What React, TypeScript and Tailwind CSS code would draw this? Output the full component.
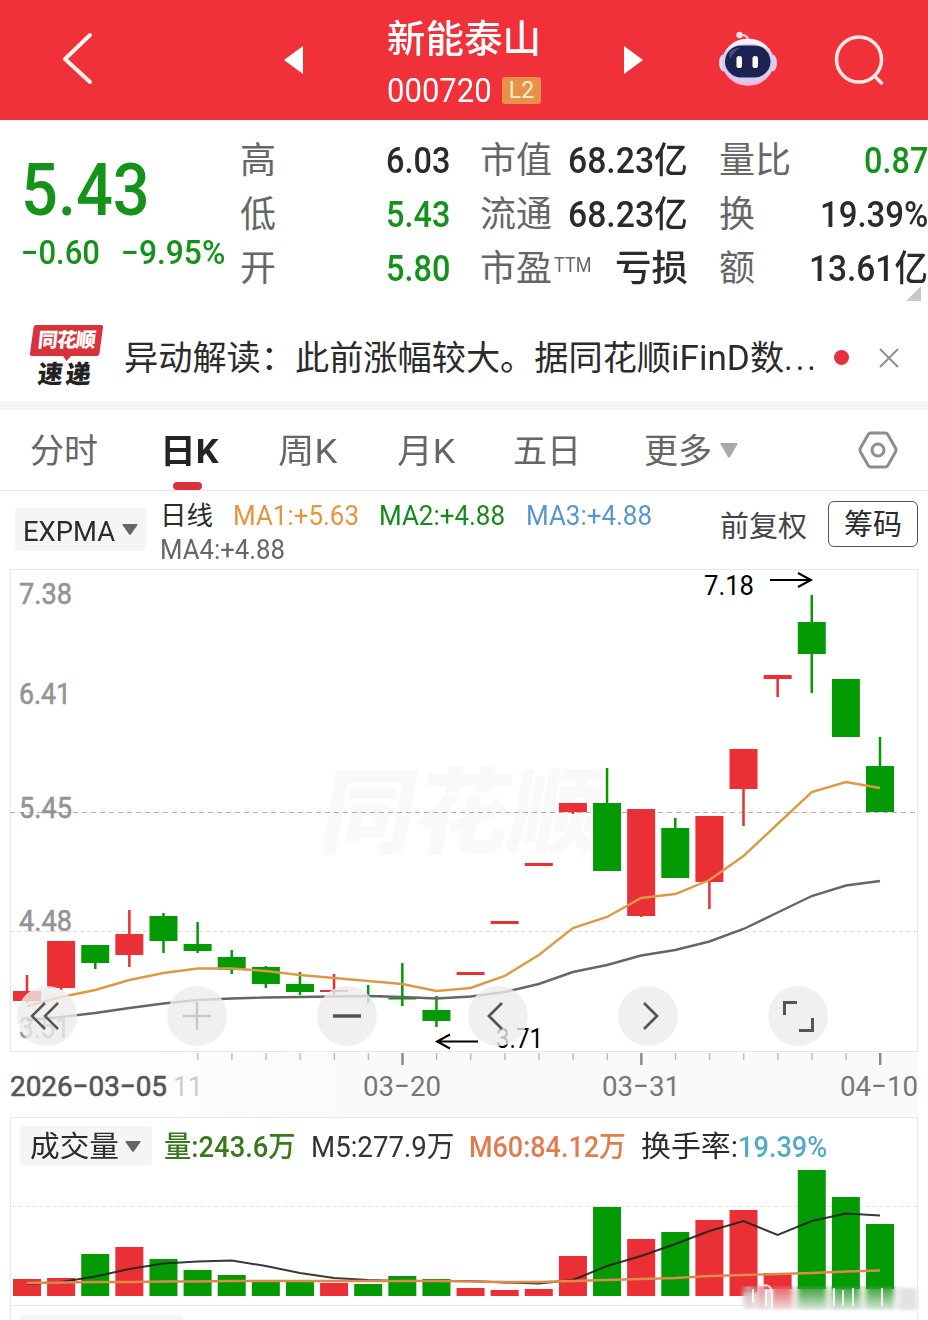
import React, { useLayoutEffect, useRef, useState } from "react";

const RED = "#ea3034";
const GREEN = "#049a04";

type Candle = { up: boolean; top: number; bottom: number; high: number; low: number; vol: number };

const c = (up: boolean, top: number, bottom: number, high: number, low: number, vol: number): Candle => ({
  up, top, bottom, high, low, vol,
});

const candles: Candle[] = [
  c(true, 991, 1001, 975, 1003, 1279),
  c(true, 941, 988, 941, 990, 1278),
  c(false, 945, 963, 945, 969, 1254),
  c(true, 934, 955, 910, 967, 1247),
  c(false, 916, 941, 913, 953, 1259),
  c(false, 944, 951, 922, 953, 1270),
  c(false, 957, 970, 950, 974, 1275),
  c(false, 967, 984, 966, 988, 1281),
  c(false, 984, 992, 972, 995, 1282),
  c(true, 990, 992, 974, 995, 1283),
  c(false, 995, 997, 985, 1003, 1284),
  c(false, 997.5, 999.5, 963, 1006, 1276),
  c(false, 1010, 1021, 996, 1027, 1279),
  c(true, 972, 975, 972, 975, 1288),
  c(true, 921, 924, 921, 924, 1290),
  c(true, 863, 866, 863, 866, 1289),
  c(true, 803, 812, 803, 814, 1256),
  c(false, 803, 871, 768, 871, 1207),
  c(true, 809, 916, 809, 917, 1239),
  c(false, 828, 878, 818, 878, 1232),
  c(true, 816, 882, 816, 909, 1220),
  c(true, 749, 789, 749, 826, 1210),
  c(true, 675, 679, 675, 697, 1273),
  c(false, 622, 654, 595, 693, 1170),
  c(false, 679, 737, 679, 737, 1197),
  c(false, 766, 812, 737, 812, 1224),
];

const xOf = (i: number) => 27 + i * 34.12;

const ema1 = [
  1006, 997, 990, 980, 973, 968.5, 968.5, 971, 975, 978, 981, 984, 991, 988, 976, 955, 928, 917, 898, 894, 880, 856,
  824, 792, 782, 788,
];
const ema2 = [
  1020, 1017, 1013, 1008, 1003.5, 1000, 998.5, 997.5, 997, 996.5, 996, 997, 998.5, 996.5, 992, 984, 972, 965, 955.5,
  950, 941.5, 929, 912.5, 896, 885.5, 881,
];
const vol5 = [
  1284, 1282, 1276.5, 1269, 1263.5, 1261.5, 1260.5, 1266, 1273, 1278, 1280, 1281, 1281, 1281, 1282.5, 1283.5, 1280,
  1266, 1256, 1244, 1231, 1221, 1235, 1221, 1213.5, 1215.5,
];
const vol60 = [
  1283, 1282.5, 1282, 1282, 1281.5, 1281.5, 1281, 1281, 1281, 1281, 1281, 1281, 1281, 1281.5, 1282, 1282, 1281, 1280,
  1279, 1278, 1276, 1275, 1274, 1273, 1271.5, 1270.5,
];

const points = (ys: number[]) => ys.map((y, i) => `${xOf(i)},${y}`).join(" ");

// Condenses a run of text to a given width, like the DIN digits of the app
const Fit = ({ w, className = "", children }: { w: number; className?: string; children: React.ReactNode }) => {
  const ref = useRef<HTMLSpanElement>(null);
  const [scale, setScale] = useState(1);

  useLayoutEffect(() => {
    if (ref.current) setScale(w / ref.current.offsetWidth);
  }, [w]);

  return (
    <span className="block shrink-0" style={{ width: w }}>
      <span
        ref={ref}
        className={`inline-block origin-left whitespace-nowrap align-top ${className}`}
        style={{ transform: `scaleX(${scale})` }}
      >
        {children}
      </span>
    </span>
  );
};

const Caret = ({ className }: { className: string }) => (
  <svg viewBox="0 0 16 11" className={className} fill="currentColor" preserveAspectRatio="none">
    <path d="M1 0h14q1 0 .5 1L9 10.300q-1 1-2 0L.5 1Q0 0 1 0z" />
  </svg>
);

const Robot = () => (
  <svg viewBox="0 0 60 56" className="w-[60px] h-[56px]">
    <path d="M22 4q7-1 9 6" fill="none" stroke="#f9cfd8" strokeWidth="2.200" />
    <circle cx="21.500" cy="4" r="3.200" fill="#ffdfe4" />
    <ellipse cx="5.500" cy="32" rx="4.500" ry="8.500" fill="#f0d3ee" />
    <ellipse cx="54.500" cy="32" rx="4.500" ry="8.500" fill="#e6c9f2" />
    <ellipse cx="30" cy="31" rx="26" ry="23.500" fill="#d2cef5" />
    <path d="M6 38Q12 54.500 30 54.500T54 38Q47 51.500 30 51.500T6 38z" fill="#fbb6d6" />
    <path d="M8 20Q15 8 30 8t22 12Q44 13 30 13T8 20z" fill="#fbeff8" />
    <rect x="7" y="14.500" width="45.500" height="32" rx="16" fill="#1c2350" />
    <path d="M11 22q4-5 12-5.500Q16 20 12 28z" fill="#46507e" />
    <rect x="18.500" y="25" width="5.500" height="12" rx="2.600" fill="#fff" />
    <rect x="34.500" y="25" width="5.500" height="12" rx="2.600" fill="#fff" />
  </svg>
);

const Header = () => (
  <header className="h-[120px] shrink-0 bg-[#f13139] flex items-center text-white">
    <svg viewBox="0 0 32 54" className="w-8 h-[54px] ml-[62px] -mt-1" fill="none" stroke="#fff3ee" strokeWidth="4" strokeLinecap="round" strokeLinejoin="round">
      <path d="M28 4 3 28l25 23" />
    </svg>
    <svg viewBox="0 0 20 30" className="w-5 h-[30px] ml-[190px]" fill="#fff">
      <path d="M0 15 19 1v28z" />
    </svg>
    <div className="ml-[83px] w-[156px] flex flex-col pt-2">
      <h1 className="text-[38px] leading-[52px] font-medium">
        <Fit w={154}>新能泰山</Fit>
      </h1>
      <div className="flex items-center h-[50px] gap-2.5">
        <Fit w={105} className="text-[34px] leading-[50px]">000720</Fit>
        <span className="w-[39px] h-[27px] rounded-[3px] bg-[#e8914c] text-[#fff3c4] text-[23px] leading-[27px] text-center">
          L2
        </span>
      </div>
    </div>
    <svg viewBox="0 0 20 30" className="w-5 h-[30px] ml-20" fill="#fff">
      <path d="M20 15 1 1v28z" />
    </svg>
    <div className="ml-[75px] -mt-0.5">
      <Robot />
    </div>
    <svg viewBox="0 0 52 52" className="w-[52px] h-[52px] ml-[54px]" fill="none" stroke="#ffe9e4" strokeWidth="3.500" strokeLinecap="round">
      <circle cx="27" cy="25.500" r="22.500" />
      <path d="m42.500 42 7 7" />
    </svg>
  </header>
);

const Stat = ({ label, sup, value, w, green }: { label: string; sup?: string; value: string; w: number; green?: boolean }) => (
  <div className="flex h-[54px] items-center justify-between leading-[54px]">
    <span className="flex text-[36px] text-[#666]">
      {label}
      {sup && (
        <span className="-mt-1 ml-0.5 leading-[54px]">
          <Fit w={37} className="text-[20px] leading-[54px]">{sup}</Fit>
        </span>
      )}
    </span>
    <Fit w={w} className={`text-[36px] font-medium ${green ? "text-[#14921a]" : "text-[#2b2b2b]"}`}>
      {value}
    </Fit>
  </div>
);

const Quote = () => (
  <section className="relative h-[181px] shrink-0 flex pt-[14px]">
    <div className="w-[240px] pl-[21px] text-[#14921a]">
      <Fit w={129} className="text-[73px] leading-[112px] font-medium">5.43</Fit>
      <div className="flex gap-[21px] text-[33px] leading-[38px] font-medium -mt-3">
        <Fit w={79}>−0.60</Fit>
        <Fit w={104}>−9.95%</Fit>
      </div>
    </div>
    <div className="w-[210px]">
      <Stat label="高" value="6.03" w={64} />
      <Stat label="低" value="5.43" w={64} green />
      <Stat label="开" value="5.80" w={64} green />
    </div>
    <div className="w-[208px] ml-[30px]">
      <Stat label="市值" value="68.23亿" w={120} />
      <Stat label="流通" value="68.23亿" w={120} />
      <Stat label="市盈" sup="TTM" value="亏损" w={73} />
    </div>
    <div className="w-[209px] ml-[31px]">
      <Stat label="量比" value="0.87" w={64} green />
      <Stat label="换" value="19.39%" w={108} />
      <Stat label="额" value="13.61亿" w={119} />
    </div>
    <svg viewBox="0 0 15 15" className="absolute right-[7px] bottom-0 w-[15px] h-[15px]" fill="#c9c9c9">
      <path d="M15 0v15H0z" />
    </svg>
  </section>
);

const News = () => (
  <section className="h-[100px] shrink-0 flex items-center pl-[30px] pt-[14px]">
    <div className="w-[73px] flex flex-col items-center mt-[-4px]">
      <div className="relative w-full h-[31px] flex items-center justify-center">
        <svg viewBox="0 0 73 37" className="absolute top-0 left-0 w-[73px] h-[37px]" fill="#d8323a">
          <path d="M6 0h65q2.500 0 2 2.500L69.500 28q-.500 3-3 3H41l-4.500 5-3.500-5H2q-2.500 0-2-3L3.500 3Q4 0 6 0z" />
        </svg>
        <span className="relative -skew-x-6 text-white text-[20px] leading-[31px] font-black tracking-[-1px]">同花顺</span>
      </div>
      <span className="-skew-x-6 text-[25px] leading-[30px] h-[28px] mt-1 font-black tracking-[3px] text-[#222]">速递</span>
    </div>
    <div className="flex ml-[21px] text-[34.200px] leading-[50px] text-[#2b2b2b] whitespace-nowrap">
      <span>异动解读：此前涨幅较大。据同花顺</span>
      <Fit w={79}>iFinD</Fit>
      <span>数</span>
      <Fit w={35} className="tracking-[3px]">...</Fit>
    </div>
    <span className="w-[15px] h-[15px] rounded-full bg-[#e2323a] ml-[15px] -mt-0.5" />
    <svg viewBox="0 0 20 20" className="w-5 h-5 ml-[30px]" fill="none" stroke="#8f8f8f" strokeWidth="2">
      <path d="m1 1 18 18M19 1 1 19" />
    </svg>
  </section>
);

const Tabs = () => (
  <nav className="h-[89px] shrink-0 border-t-[9px] border-[#f5f5f5] flex items-center text-[34px] leading-[80px] text-[#666]">
    <span className="w-[68px] h-[80px] pt-px ml-[30px]">分时</span>
    <span className="relative h-[80px] pt-px ml-[62px] w-[59px] font-bold text-[#242424]">
      <Fit w={59}>日K</Fit>
      <span className="absolute left-[13px] bottom-0 w-[29px] h-2 rounded-full bg-[#d8323a]" />
    </span>
    <span className="ml-[59px] h-[80px] pt-px"><Fit w={59}>周K</Fit></span>
    <span className="ml-[60px] h-[80px] pt-px"><Fit w={58}>月K</Fit></span>
    <span className="ml-[58px] h-[80px] pt-px w-[68px]">五日</span>
    <span className="ml-[63px] h-[80px] pt-px w-[68px]">更多</span>
    <Caret className="ml-[8px] w-[18px] h-[15px] text-[#aaa]" />
    <svg viewBox="0 0 40 38" className="ml-[120px] w-10 h-[38px]" fill="none" stroke="#8e8e8e" strokeWidth="3" strokeLinejoin="round">
      <path d="M12.500 2h15q1.500 0 2.300 1.400L37.500 17q1 2 0 4l-7.700 13.600Q29 36 27.500 36h-15q-1.500 0-2.300-1.400L2.500 21q-1-2 0-4l7.700-13.600Q11 2 12.500 2z" />
      <circle cx="20" cy="19" r="6" />
    </svg>
  </nav>
);

const Indicators = () => (
  <section className="h-[79px] shrink-0 border-t border-[#e6e6e6] flex pl-[15px]">
    <button className="mt-[17px] w-[131px] h-[43px] rounded bg-[#f5f5f5] flex items-center pl-2 text-[28px] leading-[45px] text-[#2b2b2b]">
      <Fit w={92} className="pt-1">EXPMA</Fit>
      <Caret className="ml-[7px] w-4 h-[11px] text-[#666]" />
    </button>
    <div className="ml-[14px] w-[560px] text-[28px] leading-[34px] pt-[8px]">
      <div className="flex">
        <span className="text-[26.500px] w-[73px] text-[#2b2b2b]">日线</span>
        <Fit w={126} className="text-[#e6953f]">MA1:+5.63</Fit>
        <span className="w-5" />
        <Fit w={126} className="text-[#168a1a]">MA2:+4.88</Fit>
        <span className="w-[21px]" />
        <Fit w={126} className="text-[#5a97c9]">MA3:+4.88</Fit>
      </div>
      <Fit w={125} className="text-[#666]">MA4:+4.88</Fit>
    </div>
    <span className="text-[29px] leading-[73px] text-[#444]">前复权</span>
    <button className="ml-[21px] mt-2.5 w-[90px] h-[46px] rounded-md border border-[#555] text-[29px] leading-[46px] text-[#2b2b2b]">
      筹码
    </button>
  </section>
);

const NumText = ({ x, y, w, size, fill, heavy, children }: { x: number; y: number; w: number; size: number; fill: string; heavy?: boolean; children: string }) => (
  <text x={x} y={y} fontSize={size} fill={fill} stroke={heavy ? fill : "none"} strokeWidth="0.600" textLength={w} lengthAdjust="spacingAndGlyphs">
    {children}
  </text>
);

const KLine = () => (
  <svg viewBox="0 569 928 548" className="block w-[928px] h-[548px]">
    <defs>
      <linearGradient id="axis" x1="0" x2="1">
        <stop offset="0" stopColor="#fff" />
        <stop offset="0.4" stopColor="#fafafa" />
      </linearGradient>
    </defs>
    <rect x="0" y="1053" width="918" height="64" fill="url(#axis)" />
    <rect x="10.500" y="569.500" width="907" height="482" fill="#fff" stroke="#e8e8e8" />
    <text x="318" y="846" fontSize="94" fontWeight="900" fill="#f9f9f9" transform="translate(148 0) skewX(-10)">同花顺</text>
    <path d="M10 931.500h907" stroke="#dcdcdc" strokeDasharray="4 3" />
    <path d="M10 812.500h907" stroke="#c3ad93" strokeDasharray="5 4" />
    <NumText x={19} y={604} w={53} size={29.5} fill="#949494" heavy>7.38</NumText>
    <NumText x={19} y={704} w={52} size={29.5} fill="#949494" heavy>6.41</NumText>
    <NumText x={19} y={818} w={53} size={29.5} fill="#949494" heavy>5.45</NumText>
    <NumText x={19} y={931} w={53} size={29.5} fill="#949494" heavy>4.48</NumText>
    <NumText x={19} y={1038} w={51} size={29.5} fill="#949494" heavy>3.51</NumText>

    {candles.map((k, i) => (
      <g key={i} fill={k.up ? RED : GREEN}>
        <rect x={xOf(i) - 1.25} y={k.high} width="2.500" height={k.low - k.high} />
        <rect x={xOf(i) - 14} y={k.top} width="28" height={k.bottom - k.top} />
      </g>
    ))}
    <polyline points={points(ema2)} fill="none" stroke="#666" strokeWidth="2.400" />
    <polyline points={points(ema1)} fill="none" stroke="#dc9a45" strokeWidth="2.400" />

    <NumText x={704} y={595} w={50} size={27} fill="#000">7.18</NumText>
    <path d="M770 580h41m-13-7 13 7-13 7" fill="none" stroke="#000" strokeWidth="2" />
    <NumText x={496} y={1048} w={47} size={27} fill="#000">3.71</NumText>
    <path d="M478 1041.500h-41m13-7-13 7 13 7" fill="none" stroke="#000" strokeWidth="2" />

    {candles.map((_, i) => {
      if (i < 5) return null;
      const major = i === 11 || i === 18 || i === 25;
      return (
        <rect key={i} x={xOf(i) - (major ? 1 : 0.5)} y="1053" width={major ? 2.4 : 1.4} height={major ? 12 : 7} fill={major ? "#888" : "#bbb"} />
      );
    })}
    <NumText x={10} y={1096} w={157} size={28.5} fill="#555" heavy>2026−03−05</NumText>
    <NumText x={173} y={1096} w={30} size={28.5} fill="#ccc">11</NumText>
    <NumText x={363} y={1096} w={78} size={28.5} fill="#777">03−20</NumText>
    <NumText x={602} y={1096} w={78} size={28.5} fill="#777">03−31</NumText>
    <NumText x={840} y={1096} w={78} size={28.5} fill="#777">04−10</NumText>
  </svg>
);

const controls: { d: string; muted?: boolean; width?: number }[] = [
  { d: "M28 17 15 30l13 13M41 17 28 30l13 13", width: 2.5 },
  { d: "M30 16v28M16 30h28", muted: true, width: 2.5 },
  { d: "M16 30h28", width: 3.5 },
  { d: "M34 17 21 30l13 13", width: 2.8 },
  { d: "M26 17l13 13-13 13", width: 2.8 },
  { d: "M29 16.500H16.500V29M31 44.500h13.500V32", width: 3 },
];

const ChartPanel = () => (
  <section className="relative h-[548px] shrink-0">
    <KLine />
    {/* floating chart controls */}
    <div className="absolute left-[17px] top-[417px] flex gap-[90.200px]">
      {controls.map((b, i) => (
        <button key={i} className="w-[60px] h-[60px] rounded-full bg-[#ececec]/80">
          <svg viewBox="0 0 60 60" className="w-full h-full" fill="none" stroke={b.muted ? "#c9c9c9" : "#555"} strokeWidth={b.width}>
            <path d={b.d} />
          </svg>
        </button>
      ))}
    </div>
  </section>
);

// columns of the last bars, smeared downwards under the stamp
const smears = [
  { x: 744, w: 10, fill: "#c9a5a6" },
  { x: 757, w: 10, fill: "#e58a8c" },
  { x: 772, w: 20, fill: "#ea5a5e" },
  { x: 798, w: 28, fill: "#2f9e2f" },
  { x: 832, w: 28, fill: "#2f9e2f" },
  { x: 866, w: 28, fill: "#2f9e2f" },
];

const Volume = () => (
  <section className="h-[189px] shrink-0 flex flex-col mx-[10px] border border-[#e9e9e9]">
    <div className="flex items-center h-[56px] pl-[9px] text-[29px] leading-[42px]">
      <button className="w-[132px] h-[40px] rounded bg-[#f5f5f5] flex items-center pl-[9px] text-[#2b2b2b]">
        <Fit w={89} className="pt-0.5">成交量</Fit>
        <Caret className="ml-[7px] w-4 h-[11px] text-[#666]" />
      </button>
      <div className="flex ml-3 pt-px">
        <Fit w={132} className="text-[#39791a] font-medium">量:243.6万</Fit>
        <span className="w-[15px]" />
        <Fit w={143} className="text-[#333]">M5:277.9万</Fit>
        <span className="w-[15px]" />
        <Fit w={157} className="text-[#df7d4c] font-medium">M60:84.12万</Fit>
        <span className="w-[15px]" />
        <Fit w={97} className="text-[#2b2b2b]">换手率:</Fit>
        <Fit w={89} className="text-[#55a9cb] font-medium">19.39%</Fit>
      </div>
    </div>
    <svg viewBox="11 1174 906 131" className="block w-[906px] h-[131px] overflow-visible">
      <defs>
        <filter id="soft" x="-10%" y="-60%" width="120%" height="220%">
          <feGaussianBlur stdDeviation="2.5 1.5" />
        </filter>
        <linearGradient id="fade" x1="0" x2="0" y1="0" y2="1">
          <stop offset="0" stopColor="#fff" />
          <stop offset="1" stopColor="#000" />
        </linearGradient>
        <mask id="down">
          <rect x="730" y="1286" width="200" height="26" fill="url(#fade)" />
        </mask>
      </defs>
      <path d="M11 1206.500h906" stroke="#e2e2e2" strokeDasharray="4 3" />
      {candles.map((k, i) => (
        <rect key={i} x={xOf(i) - 14} y={k.vol} width="28" height={(i > 21 ? 1289 : 1296) - k.vol} fill={k.up ? RED : GREEN} />
      ))}
      <polyline points={points(vol5)} fill="none" stroke="#222" strokeOpacity="0.9" strokeWidth="2" />
      <polyline points={points(vol60)} fill="none" stroke="#dd8a4c" strokeWidth="2.400" />
      {/* smeared stamp over the last bars */}
      <g filter="url(#soft)">
        <rect x="744" y="1292" width="150" height="17" fill="#ededed" />
        <rect x="898" y="1288" width="19" height="22" fill="#e2e2e2" />
      </g>
      <g mask="url(#down)">
        <g filter="url(#soft)">
          {smears.map((s) => (
            <rect key={s.x} x={s.x} y="1286" width={s.w} height="26" fill={s.fill} />
          ))}
        </g>
      </g>
      <g stroke="#fff" strokeWidth="2" fill="none" opacity="0.85">
        <path d="M763 1285.500q9-1.500 9 9v14M766 1290v16M753 1289v14M834 1288v18M843 1290v16M853 1288v18M882 1288v18" />
      </g>
    </svg>
  </section>
);

const App = () => (
  <div className="w-[928px] h-[1320px] overflow-hidden bg-white flex flex-col font-['Roboto','Noto_Sans_CJK_SC',sans-serif]">
    <Header />
    <Quote />
    <News />
    <Tabs />
    <Indicators />
    <ChartPanel />
    <Volume />
    <div className="flex-1 mx-[10px] border-x border-[#e9e9e9] pl-[9px] pt-[9px]">
      <div className="w-[163px] h-5 rounded bg-[#f5f5f5]" />
    </div>
  </div>
);

export default App;
